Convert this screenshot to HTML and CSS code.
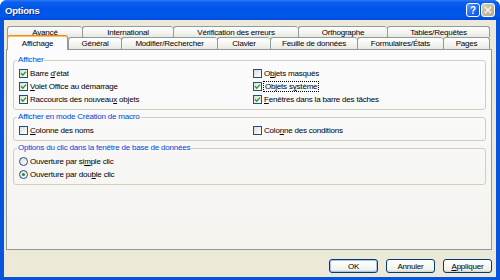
FILE: index.html
```html
<!DOCTYPE html>
<html lang="fr">
<head>
    <meta charset="UTF-8">
    <title>Options</title>
    <link rel="stylesheet" href="styles.css">
</head>
<body>
    <div class="window">
        <div class="titlebar">
            <span class="title">Options</span>
            <div class="title-buttons">
                <span class="tbtn help">?</span>
                <span class="tbtn close">
                    <svg width="8" height="8" viewBox="0 0 8 8"><path d="M1 1 L7 7 M7 1 L1 7" stroke="#fff" stroke-width="1.6"/></svg>
                </span>
            </div>
        </div>

        <div class="client">
            <div class="tabs">
                <div class="tab-row back">
                    <div class="tab">Avancé</div>
                    <div class="tab">International</div>
                    <div class="tab">Vérification des erreurs</div>
                    <div class="tab">Orthographe</div>
                    <div class="tab last">Tables/Requêtes</div>
                </div>
                <div class="tab-row front">
                    <div class="tab active">Affichage</div>
                    <div class="tab">Général</div>
                    <div class="tab">Modifier/Rechercher</div>
                    <div class="tab">Clavier</div>
                    <div class="tab">Feuille de données</div>
                    <div class="tab">Formulaires/États</div>
                    <div class="tab last">Pages</div>
                </div>
            </div>

            <div class="panel">
                <fieldset class="group">
                    <legend>Afficher</legend>
                    <div class="options">
                        <div class="option"><span class="box checked"></span><span>Barre <u>d</u>'état</span></div>
                        <div class="option"><span class="box"></span><span>O<u>b</u>jets masqués</span></div>
                        <div class="option"><span class="box checked"></span><span><u>V</u>olet Office au démarrage</span></div>
                        <div class="option"><span class="box checked"></span><span class="focus">Objets s<u>y</u>stème</span></div>
                        <div class="option"><span class="box checked"></span><span>Raccourcis des nouveau<u>x</u> objets</span></div>
                        <div class="option"><span class="box checked"></span><span><u>F</u>enêtres dans la barre des tâches</span></div>
                    </div>
                </fieldset>

                <fieldset class="group">
                    <legend>Afficher en mode Création de macro</legend>
                    <div class="options">
                        <div class="option"><span class="box"></span><span><u>C</u>olonne des noms</span></div>
                        <div class="option"><span class="box"></span><span>Colo<u>n</u>ne des conditions</span></div>
                    </div>
                </fieldset>

                <fieldset class="group">
                    <legend>Options du clic dans la fenêtre de base de données</legend>
                    <div class="options single">
                        <div class="option"><span class="radio"></span><span>Ouverture par si<u>m</u>ple clic</span></div>
                        <div class="option"><span class="radio checked"></span><span>Ouverture par dou<u>b</u>le clic</span></div>
                    </div>
                </fieldset>
            </div>

            <div class="footer">
                <button class="default">OK</button>
                <button>Annuler</button>
                <button><u>A</u>ppliquer</button>
            </div>
        </div>
    </div>
</body>
</html>
```

FILE: styles.css
```css
* {
    box-sizing: border-box;
}
body {
    margin: 0;
    font-family: "Liberation Sans", Arial, sans-serif;
    font-size: 8px;
    letter-spacing: -0.2px;
    color: #000;
    background: #fff;
}
.window {
    width: 500px;
    height: 280px;
    display: flex;
    flex-direction: column;
    background: #0855DD;
    border-radius: 7px 7px 0 0;
    overflow: hidden;
}
.titlebar {
    height: 20px;
    flex: none;
    display: flex;
    align-items: center;
    padding: 0 5px 0 5px;
    background: linear-gradient(#2A7BF5 0%, #0A5FEF 12%, #0055E8 45%, #0058EE 80%, #0049DA 100%);
}
.title {
    flex: 1;
    color: #fff;
    font-weight: bold;
    font-size: 9.5px;
    letter-spacing: -0.2px;
    text-shadow: 1px 1px #0A2A8A;
}
.title-buttons {
    display: flex;
    gap: 1px;
}
.tbtn {
    width: 14px;
    height: 14px;
    border: 1px solid #fff;
    border-radius: 3px;
    display: flex;
    align-items: center;
    justify-content: center;
}
.help {
    background: linear-gradient(135deg, #5C9BFF, #1E62F0 60%, #1450D8);
    color: #fff;
    font-weight: bold;
    font-size: 10px;
    letter-spacing: 0;
}
.close {
    background: linear-gradient(135deg, #D8D0B8, #B4AA8E);
}
.close svg path {
    stroke: #F4F0E4;
}
.client {
    flex: 1;
    margin: 0 4px 3px;
    padding: 6px 4px 4px 2px;
    background: #ECE9D8;
    display: flex;
    flex-direction: column;
}
.tabs {
    padding-left: 1px;
}
.tab-row {
    display: grid;
    width: 483px;
}
.tab-row.back {
    height: 11px;
    grid-template-columns: 75px 91px 125px 89px 103px;
}
.tab-row.front {
    height: 12px;
    grid-template-columns: 61px 53px 96px 53px 87px 86px 47px;
}
.tab {
    display: flex;
    align-items: center;
    justify-content: center;
    border: 1px solid #919B9C;
    border-right: none;
    border-bottom: none;
    border-radius: 3px 3px 0 0;
    background: linear-gradient(#FFFFFF, #F3F3EF 60%, #E8E7E1);
    white-space: nowrap;
}
.tab.last {
    border-right: 1px solid #919B9C;
}
.tab.active {
    position: relative;
    z-index: 1;
    margin: -2px 0 -1px;
    border-right: 1px solid #919B9C;
    border-top-color: #E68B2C;
    box-shadow: inset 0 1px #FFC83C;
    background: #FCFCFE;
}
.panel {
    flex: 1;
    border: 1px solid #919B9C;
    background: linear-gradient(#FCFCFE, #F4F3EE);
    padding: 0 5px 0 6px;
}
.group {
    margin: 5px 0 0;
    padding: 2px 5px 3px;
    border: 1px solid #D0D0BF;
    border-radius: 3px;
    min-width: 0;
}
.group + .group {
    margin-top: 2px;
}
.group legend {
    color: #0046D5;
    line-height: 10px;
    padding: 0 1px;
    margin-left: -2px;
}
.options {
    display: grid;
    grid-template-columns: 234px 1fr;
    grid-auto-rows: 13px;
}
.options.single {
    grid-template-columns: 1fr;
}
.option {
    display: flex;
    align-items: center;
    gap: 2px;
    white-space: nowrap;
}
.box {
    width: 9px;
    height: 9px;
    flex: none;
    border: 1px solid #1C5180;
    background: linear-gradient(135deg, #DCDCD7, #FFFFFF);
}
.box.checked {
    background-image: url("data:image/svg+xml,%3Csvg xmlns='http://www.w3.org/2000/svg' viewBox='0 0 7 7'%3E%3Cpath d='M1 3.3 L2.8 5.2 L6 1.6' fill='none' stroke='%2321A121' stroke-width='1.4'/%3E%3C/svg%3E"), linear-gradient(135deg, #DCDCD7, #FFFFFF);
}
.radio {
    width: 9px;
    height: 9px;
    flex: none;
    border: 1px solid #1C5180;
    border-radius: 50%;
    background: linear-gradient(135deg, #DCDCD7, #FFFFFF);
    display: flex;
    align-items: center;
    justify-content: center;
}
.radio.checked::after {
    content: "";
    width: 3px;
    height: 3px;
    border-radius: 50%;
    background: #3C7A3C;
}
.focus {
    outline: 1px dotted #000;
    outline-offset: 0;
    padding: 0 1px;
}
.footer {
    margin-top: 9px;
    display: flex;
    justify-content: flex-end;
    gap: 8px;
}
button {
    width: 49px;
    height: 14px;
    padding: 0;
    font: inherit;
    letter-spacing: inherit;
    color: #000;
    border: 1px solid #003C74;
    border-radius: 3px;
    background: linear-gradient(#FFFFFF, #F2F2EC 80%, #D8D2C6);
}
button.default {
    box-shadow: inset 0 0 0 1px #A8C4F0;
}
```
